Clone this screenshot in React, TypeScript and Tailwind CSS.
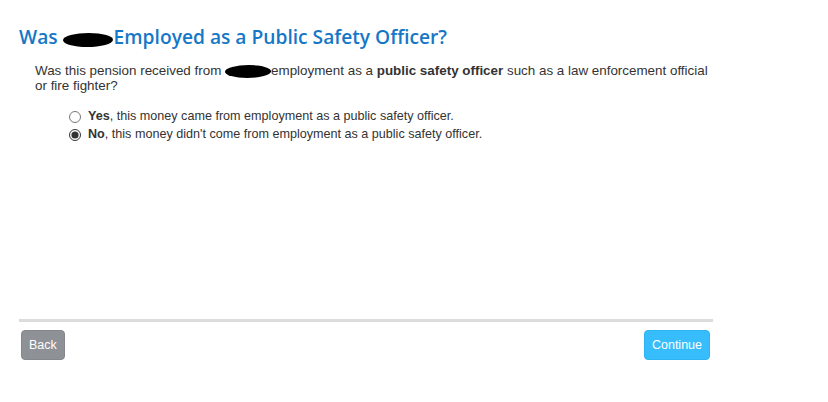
import React, { useState } from "react";

function Redact({ w, h = 16 }: { w: number; h?: number }) {
  return (
    <span
      className="inline-block bg-black rounded-[50%] align-middle -skew-x-6"
      style={{ width: w, height: h }}
    />
  );
}

export default function App() {
  const [choice, setChoice] = useState("no");
  return (
    <div className="w-[828px] h-[402px] bg-white font-['Liberation_Sans',Arial,sans-serif] text-[#333]">
      <div className="w-[694px] ml-[19px] pt-[22px]">
        <h1 className="font-['Open_Sans',sans-serif] font-semibold text-[19.2px] leading-[26px] text-[#1677c6] flex items-center">
          <span>Was</span>
          <span className="ml-[5px] mr-[1px] mt-[3px]">
            <Redact w={50} h={14} />
          </span>
          <span>Employed as a Public Safety Officer?</span>
        </h1>
        <p className="ml-[16px] mt-[12px] text-[13.4px] leading-[15px]">
          Was this pension received from <Redact w={46} h={13} />
          employment as a <b>public safety officer</b> such as a law enforcement official or fire
          fighter?
        </p>
        <div className="ml-[50px] mt-[17px] flex flex-col gap-[5px] text-[12.6px] leading-[13px]">
          <label className="flex items-center gap-[7px]">
            <input
              type="radio"
              name="pso"
              checked={choice === "yes"}
              onChange={() => setChoice("yes")}
              className="w-[12px] h-[12px] m-0 accent-[#333]"
            />
            <span>
              <b>Yes</b>, this money came from employment as a public safety officer.
            </span>
          </label>
          <label className="flex items-center gap-[7px]">
            <input
              type="radio"
              name="pso"
              checked={choice === "no"}
              onChange={() => setChoice("no")}
              className="w-[12px] h-[12px] m-0 accent-[#333]"
            />
            <span>
              <b>No</b>, this money didn't come from employment as a public safety officer.
            </span>
          </label>
        </div>
        <div className="mt-[178px] h-[3px] bg-[#dcdcdc]" />
        <div className="flex justify-between mt-[8px] pl-[2px] pr-[3px]">
          <button className="h-[30px] px-[7px] rounded-[4px] bg-[#8e9196] text-white text-[12.5px] border border-[#84878c]">
            Back
          </button>
          <button className="h-[30px] px-[7px] rounded-[4px] bg-[#37bdfb] text-white text-[12.5px] border border-[#2fb3f2]">
            Continue
          </button>
        </div>
      </div>
    </div>
  );
}
